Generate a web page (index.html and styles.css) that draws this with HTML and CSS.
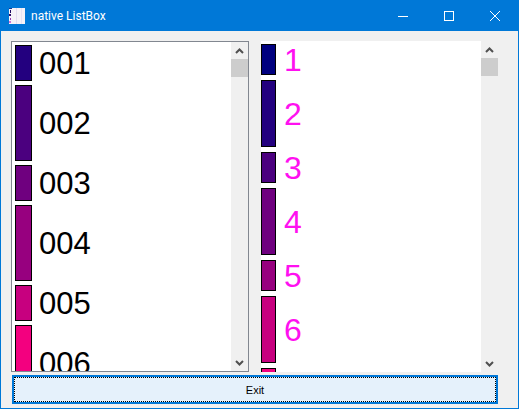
FILE: index.html
```html
<!DOCTYPE html>
<html lang="en">
<head>
    <meta charset="UTF-8">
    <title>native ListBox</title>
    <link rel="stylesheet" href="styles.css">
</head>
<body>
    <div class="window">
        <div class="titlebar">
            <svg class="app-icon" width="16" height="16" viewBox="0 0 16 16">
                <rect x="0" y="0" width="16" height="16" fill="#f6f2f8"/>
                <rect x="0" y="0" width="3" height="1" fill="#1a3a90"/>
                <rect x="1" y="2" width="1" height="3" fill="#1c0a60"/>
                <rect x="0" y="6" width="2" height="2" fill="#30106a"/>
                <rect x="1" y="10" width="1" height="2" fill="#9a3ab0"/>
                <rect x="0" y="13" width="2" height="2" fill="#d070d8"/>
                <rect x="7" y="0" width="1" height="16" fill="#e4dcf0"/>
                <rect x="12" y="0" width="1" height="16" fill="#e8e2f2"/>
            </svg>
            <span class="title">native ListBox</span>
            <div class="caption-buttons">
                <div class="caption-btn">
                    <svg width="10" height="10" viewBox="0 0 10 10"><path d="M0 5.5H10" stroke="#fff" fill="none"/></svg>
                </div>
                <div class="caption-btn">
                    <svg width="10" height="10" viewBox="0 0 10 10"><rect x="0.5" y="0.5" width="9" height="9" stroke="#fff" fill="none"/></svg>
                </div>
                <div class="caption-btn">
                    <svg width="10" height="10" viewBox="0 0 10 10"><path d="M0 0L10 10M10 0L0 10" stroke="#fff" fill="none"/></svg>
                </div>
            </div>
        </div>

        <div class="client">
            <div class="lists">
                <div class="listbox listbox-left">
                    <div class="items">
                        <div class="item"><div class="swatch" style="background:#23007f"></div><span>001</span></div>
                        <div class="item tall"><div class="swatch" style="background:#4b007f"></div><span>002</span></div>
                        <div class="item"><div class="swatch" style="background:#6f007f"></div><span>003</span></div>
                        <div class="item tall"><div class="swatch" style="background:#97007f"></div><span>004</span></div>
                        <div class="item"><div class="swatch" style="background:#c7007f"></div><span>005</span></div>
                        <div class="item tall"><div class="swatch" style="background:#f3007f"></div><span>006</span></div>
                    </div>
                    <div class="scrollbar">
                        <svg class="arrow" width="9" height="6" viewBox="0 0 9 6"><path d="M1 5L4.5 1.5L8 5" stroke="#505050" stroke-width="2" fill="none"/></svg>
                        <div class="thumb"></div>
                        <div class="track"></div>
                        <svg class="arrow" width="9" height="6" viewBox="0 0 9 6"><path d="M1 1L4.5 4.5L8 1" stroke="#505050" stroke-width="2" fill="none"/></svg>
                    </div>
                </div>

                <div class="listbox listbox-right">
                    <div class="items">
                        <div class="item"><div class="swatch" style="background:#00007f"></div><span>1</span></div>
                        <div class="item tall"><div class="swatch" style="background:#23007f"></div><span>2</span></div>
                        <div class="item"><div class="swatch" style="background:#4b007f"></div><span>3</span></div>
                        <div class="item tall"><div class="swatch" style="background:#6f007f"></div><span>4</span></div>
                        <div class="item"><div class="swatch" style="background:#97007f"></div><span>5</span></div>
                        <div class="item tall"><div class="swatch" style="background:#c7007f"></div><span>6</span></div>
                        <div class="item"><div class="swatch" style="background:#f3007f"></div><span></span></div>
                    </div>
                    <div class="scrollbar">
                        <svg class="arrow" width="9" height="6" viewBox="0 0 9 6"><path d="M1 5L4.5 1.5L8 5" stroke="#505050" stroke-width="2" fill="none"/></svg>
                        <div class="thumb"></div>
                        <div class="track"></div>
                        <svg class="arrow" width="9" height="6" viewBox="0 0 9 6"><path d="M1 1L4.5 4.5L8 1" stroke="#505050" stroke-width="2" fill="none"/></svg>
                    </div>
                </div>
            </div>

            <button class="exit-button"><span class="focus-ring">Exit</span></button>
        </div>
    </div>
</body>
</html>
```

FILE: styles.css
```css
html, body {
    margin: 0;
    padding: 0;
    height: 100%;
}
body {
    font-family: 'Liberation Sans', Arial, sans-serif;
    background-color: #f0f0f0;
}
.window {
    box-sizing: border-box;
    height: 409px;
    width: 519px;
    display: flex;
    flex-direction: column;
    border: 1px solid #0078d7;
    border-top: none;
}
.titlebar {
    height: 31px;
    flex: none;
    display: flex;
    align-items: center;
    background-color: #0078d7;
    color: white;
    font-family: Roboto, 'Liberation Sans', sans-serif;
    font-size: 12px;
    margin: 0 -1px;
}
.app-icon {
    margin-left: 9px;
    margin-right: 6px;
}
.title {
    flex: 1;
}
.caption-buttons {
    display: flex;
    padding-right: 1px;
}
.caption-btn {
    width: 46px;
    height: 31px;
    display: flex;
    align-items: center;
    justify-content: center;
}
.client {
    flex: 1;
    display: flex;
    flex-direction: column;
    padding: 10px 20px 3px 10px;
    min-height: 0;
}
.lists {
    display: flex;
    height: 331px;
    flex: none;
}
.listbox {
    display: flex;
    overflow: hidden;
    background-color: white;
    box-sizing: border-box;
}
.listbox-left {
    width: 238px;
    border: 1px solid #828790;
    font-size: 31px;
    color: black;
}
.listbox-right {
    width: 237px;
    margin-left: 12px;
    font-size: 32px;
    color: #ff10f0;
}
.items {
    flex: 1;
    min-width: 0;
    overflow: hidden;
}
.item {
    display: flex;
    align-items: center;
    box-sizing: border-box;
}
.item span {
    padding-top: 2px;
}
.listbox-left .items {
    padding: 1px 0 0 3px;
}
.listbox-left .item {
    height: 40px;
    padding: 2px 0;
}
.listbox-left .item.tall {
    height: 80px;
}
.listbox-left .swatch {
    width: 17px;
    margin-right: 7px;
}
.listbox-right .items {
    padding-top: 1px;
}
.listbox-right .item {
    height: 36px;
    padding: 2px 0 3px;
}
.listbox-right .item.tall {
    height: 72px;
}
.listbox-right .swatch {
    width: 15px;
    margin-right: 8px;
}
.swatch {
    flex: none;
    align-self: stretch;
    border: 1px solid black;
    box-sizing: border-box;
}
.scrollbar {
    width: 17px;
    flex: none;
    display: flex;
    flex-direction: column;
    align-items: center;
    background-color: #f0f0f0;
}
.arrow {
    flex: none;
    margin: 6px 0 5px;
}
.thumb {
    flex: none;
    width: 100%;
    height: 18px;
    background-color: #cdcdcd;
}
.track {
    flex: 1;
}
.exit-button {
    flex: none;
    height: 29px;
    margin: 3px 0 0 1px;
    padding: 0;
    background-color: #e5f1fb;
    border: 2px solid #0078d7;
    font-family: 'Liberation Sans', Arial, sans-serif;
    font-size: 11px;
    color: black;
    display: flex;
}
.focus-ring {
    flex: 1;
    display: flex;
    align-items: center;
    justify-content: center;
    border: 1px dotted black;
}
```
